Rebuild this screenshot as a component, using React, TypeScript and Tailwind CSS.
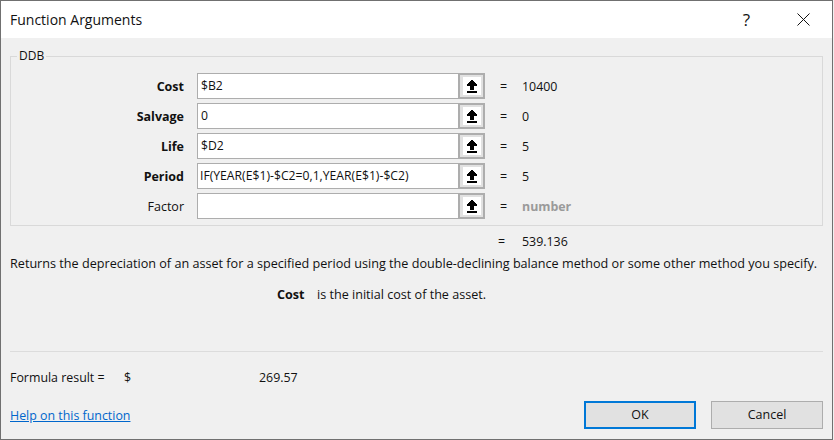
const font = { fontFamily: '"Open Sans", "Noto Sans", sans-serif' };

function Arrow() {
  return (
    <svg width="10" height="13" viewBox="0 0 10 13" shapeRendering="crispEdges">
      <path d="M4 0 H6 V1 H7 V2 H8 V3 H9 V4 H10 V6 H7 V10 H3 V6 H0 V4 H1 V3 H2 V2 H3 V1 H4 Z" fill="#000" />
      <rect x="0" y="11" width="10" height="2" fill="#000" />
    </svg>
  );
}

function Row({ label, value, result, bold = true, muted = false, long = false }: { label: string; value: string; result: string; bold?: boolean; muted?: boolean; long?: boolean }) {
  return (
    <div className="flex h-[26px] items-center">
      <div className={`w-[174px] pt-[2px] pr-[1px] text-right text-[12.5px] text-[#111] ${bold ? "font-bold" : ""}`}>{label}</div>
      <div className={`ml-[12px] flex h-[26px] w-[261px] items-center border border-[#adadad] border-r-0 bg-white pt-[1px] text-[12.2px] text-[#111] ${long ? "pl-[2px]" : "pl-[3px]"}`}>{value}</div>
      <div className="flex h-[26px] w-[27px] items-center justify-center border-[2px] border-[#adadad] bg-[#e1e1e1]">
        <div className="flex h-[18px] w-[18px] items-center justify-center bg-white"><Arrow /></div>
      </div>
      <div className="ml-[15px] w-[22px] pt-[2px] text-[12.5px] text-[#111]">=</div>
      <div className={`pt-[2px] text-[12.4px] ${muted ? "font-bold text-[#9a9a9a]" : "text-[#111]"}`}>{value === "" ? "number" : result}</div>
    </div>
  );
}

export default function App() {
  return (
    <div className="h-[440px] w-[834px] overflow-hidden bg-[#f0f0f0]" style={font}>
      <div className="flex h-[440px] w-[833px] flex-col border border-[#707070]">
        <div className="flex h-[37px] items-center bg-white pl-[9px] text-[14px] text-[#111]">
          <span className="flex-1">Function Arguments</span>
          <span className="mr-[47px] text-[17px]">?</span>
          <svg className="mr-[22px]" width="13" height="13" viewBox="0 0 13 13"><path d="M0.5 0.5 L12.5 12.5 M12.5 0.5 L0.5 12.5" stroke="#111" strokeWidth="1" /></svg>
        </div>
        <div className="relative mx-[9px] mt-[18px] h-[170px] border border-[#d9d9d9]">
          <span className="absolute left-[6px] top-[-9px] bg-[#f0f0f0] px-[2px] text-[12px] leading-[16px] text-[#111]">DDB</span>
          <div className="flex flex-col gap-[4px] pt-[16px]">
            <Row label="Cost" value="$B2" result="10400" />
            <Row label="Salvage" value="0" result="0" />
            <Row label="Life" value="$D2" result="5" />
            <Row label="Period" value="IF(YEAR(E$1)-$C2=0,1,YEAR(E$1)-$C2)" result="5" long />
            <Row label="Factor" value="" result="number" bold={false} muted />
          </div>
        </div>
        <div className="ml-[497px] mt-[7px] flex text-[12.4px] leading-[18px] text-[#111]"><span className="w-[24px]">=</span><span>539.136</span></div>
        <div className="ml-[9px] mt-[3px] text-[12.64px] leading-[18px] whitespace-nowrap text-[#111]">Returns the depreciation of an asset for a specified period using the double-declining balance method or some other method you specify.</div>
        <div className="ml-[276px] mt-[14px] flex text-[12.6px] leading-[18px] text-[#111]"><span className="w-[40px] font-bold">Cost</span><span>is the initial cost of the asset.</span></div>
        <div className="mx-[9px] mt-[47px] h-[1px] bg-[#dcdcdc]"></div>
        <div className="ml-[9px] mt-[17px] flex text-[12.4px] leading-[18px] text-[#111]"><span className="w-[114px]">Formula result =</span><span className="w-[135px]">$</span><span>269.57</span></div>
        <div className="mt-[14px] flex items-start pl-[9px] pr-[9px]">
          <a className="mt-[6px] flex-1 text-[12.4px] leading-[18px] text-[#0066cc] underline">Help on this function</a>
          <div className="flex h-[28px] w-[112px] items-center justify-center border-[2px] border-[#0078d7] bg-[#e1e1e1] text-[12.5px] text-[#111]">OK</div>
          <div className="ml-[15px] flex h-[28px] w-[112px] items-center justify-center border border-[#adadad] bg-[#e1e1e1] text-[12.5px] text-[#111]">Cancel</div>
        </div>
      </div>
    </div>
  );
}
